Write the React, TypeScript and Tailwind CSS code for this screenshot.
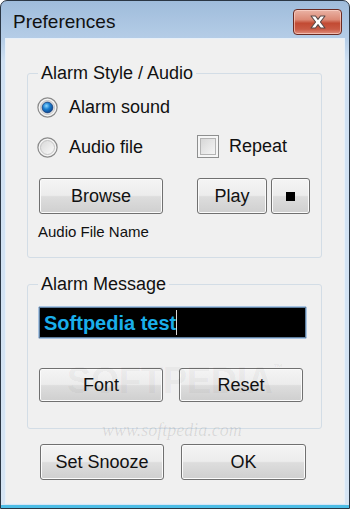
import React from "react";

const font = { fontFamily: '"Liberation Sans", Arial, sans-serif' };

function Btn({ w, h = "h-[36px]", children }: { w: string; h?: string; children: React.ReactNode }) {
  return (
    <div
      className={`${w} ${h} shrink-0 flex items-center justify-center rounded-[3px] border border-[#707070] bg-[linear-gradient(to_bottom,#f4f4f4_0%,#ececec_48%,#dddddd_52%,#cfcfcf_100%)] shadow-[inset_0_0_0_1px_#fbfbfb] text-[18px] text-[#111]`}
    >
      {children}
    </div>
  );
}

function Radio({ checked }: { checked?: boolean }) {
  return (
    <svg width="21" height="21" viewBox="0 0 21 21" className="shrink-0">
      <defs>
        <linearGradient id="rbg" x1="0" y1="0" x2="1" y2="1">
          <stop offset="0" stopColor="#d8d8d8" />
          <stop offset="1" stopColor="#fbfbfb" />
        </linearGradient>
        <radialGradient id="rdot" cx="0.4" cy="0.35" r="0.7">
          <stop offset="0" stopColor="#8fd8ff" />
          <stop offset="0.45" stopColor="#1a7fd0" />
          <stop offset="1" stopColor="#0d3f86" />
        </radialGradient>
      </defs>
      <circle cx="10.5" cy="10.5" r="9.6" fill="#f4f4f4" stroke="#8a8a8a" strokeWidth="1.2" />
      <circle cx="10.5" cy="10.5" r="7" fill="url(#rbg)" stroke="#c4c4c4" strokeWidth="1" />
      {checked && <circle cx="10.5" cy="10.5" r="5.4" fill="url(#rdot)" stroke="#1b3f78" strokeWidth="0.8" />}
    </svg>
  );
}

function Checkbox() {
  return (
    <svg width="22" height="23" viewBox="0 0 22 23" className="shrink-0">
      <defs>
        <linearGradient id="cbg" x1="0" y1="0" x2="1" y2="1">
          <stop offset="0" stopColor="#d6d6d6" />
          <stop offset="1" stopColor="#f6f6f6" />
        </linearGradient>
      </defs>
      <rect x="0.5" y="0.5" width="21" height="22" fill="#f6f6f6" stroke="#8e8f8f" />
      <rect x="3.5" y="3.5" width="15" height="16" fill="url(#cbg)" stroke="#b4b4b4" />
    </svg>
  );
}

function CloseBtn() {
  return (
    <div className="w-[49px] h-[26px] rounded-[4px] border border-[#6a2a22] bg-[linear-gradient(to_bottom,#eab3a5_0%,#dc8a76_40%,#c24a33_55%,#c95a44_80%,#e09080_100%)] shadow-[inset_0_0_0_1px_rgba(255,220,210,0.6)] flex items-center justify-center">
      <svg width="22" height="16" viewBox="0 0 22 16">
        <path d="M4 2 L8.5 2 L11 5.3 L13.5 2 L18 2 L13.4 8 L18 14 L13.5 14 L11 10.7 L8.5 14 L4 14 L8.6 8 Z" fill="#ffffff" stroke="#5a4a48" strokeWidth="1.1" strokeLinejoin="round" />
      </svg>
    </div>
  );
}

export default function App() {
  return (
    <div className="w-[350px] h-[509px] bg-white" style={font}>
      <div className="w-full h-full flex flex-col rounded-t-[7px] border border-[#2a3644] bg-[linear-gradient(to_bottom,#9fbcdb_0px,#b5cde7_38px,#cfe0f2_60px,#d6e5f4_100%)] overflow-hidden">
        {/* Title bar */}
        <div className="h-[37px] shrink-0 flex items-center justify-between pl-[12px] pr-[7px]">
          <span className="text-[19px] text-[#111] leading-none mt-[3px]">Preferences</span>
          <div className="mt-[4px]">
            <CloseBtn />
          </div>
        </div>
        {/* Frame body */}
        <div className="flex-1 flex flex-col px-[4px] pb-[1px] border-b-[3px] border-[#4cbde6]">
          <div className="flex-1 flex flex-col border border-[#e8f0f8] bg-[#f0f0f0] pl-[21px] pb-[2px] relative text-[#111]">
            {/* Group 1 */}
            <div className="mt-[34px] w-[295px] relative border border-[#d3dde6] rounded-[3px] pt-[21px] pb-[17px]">
              <div className="absolute top-[-11px] left-[10px] px-[3px] bg-[#f0f0f0] text-[18px] leading-[20px]">
                Alarm Style / Audio
              </div>
              <div className="h-[24px] flex items-center pl-[9px]">
                <Radio checked />
                <span className="ml-[11px] text-[18px]">Alarm sound</span>
              </div>
              <div className="mt-[16px] h-[24px] flex items-center">
                <div className="w-[169px] flex items-center pl-[9px]">
                  <Radio />
                  <span className="ml-[11px] text-[18px]">Audio file</span>
                </div>
                <div className="flex items-center self-start -mt-[2px]">
                  <Checkbox />
                  <span className="ml-[10px] text-[18px]">Repeat</span>
                </div>
              </div>
              <div className="mt-[19px] flex items-center pl-[11px]">
                <Btn w="w-[124px]">Browse</Btn>
                <div className="w-[34px]" />
                <Btn w="w-[70px]">Play</Btn>
                <div className="w-[4px]" />
                <Btn w="w-[39px]">
                  <div className="w-[9px] h-[9px] bg-black" />
                </Btn>
              </div>
              <div className="mt-[10px] h-[16px] flex items-center pl-[10px] text-[15px]">Audio File Name</div>
            </div>

            {/* Group 2 */}
            <div className="mt-[26px] w-[295px] relative border border-[#d3dde6] rounded-[3px] pt-[21px] pb-[26px]">
              <div className="absolute top-[-11px] left-[10px] px-[3px] bg-[#f0f0f0] text-[18px] leading-[20px]">
                Alarm Message
              </div>
              <div className="ml-[10px] w-[269px] h-[33px] rounded-[2px] border border-[#a9c4e2] bg-black shadow-[inset_0_0_0_1px_#5f7f9f] flex items-center pl-[5px]">
                <span className="text-[20px] font-bold text-[#1aaeea] leading-none">Softpedia test</span>
                <span className="inline-block w-[1px] h-[25px] bg-[#d8d8d8]" />
              </div>
              <div className="mt-[29px] flex items-center pl-[11px] gap-[16px]">
                <Btn w="w-[124px]" h="h-[34px]">Font</Btn>
                <Btn w="w-[124px]" h="h-[34px]">Reset</Btn>
              </div>
            </div>

            {/* Bottom buttons */}
            <div className="mt-[15px] flex items-center pl-[13px] gap-[17px]">
              <Btn w="w-[124px]">Set Snooze</Btn>
              <Btn w="w-[125px]">OK</Btn>
            </div>

            {/* Watermark overlay */}
            <div className="absolute left-[61px] top-[324px] text-[36px] font-bold text-black/[0.05] pointer-events-none leading-none whitespace-nowrap">
              SOFTPEDIA<span className="text-[10px] align-top">™</span>
            </div>
            <div className="absolute left-[96px] top-[382px] text-[18px] italic text-black/[0.1] pointer-events-none leading-none whitespace-nowrap" style={{ fontFamily: '"Liberation Serif", serif' }}>
              www.softpedia.com
            </div>
          </div>
        </div>
      </div>
    </div>
  );
}
